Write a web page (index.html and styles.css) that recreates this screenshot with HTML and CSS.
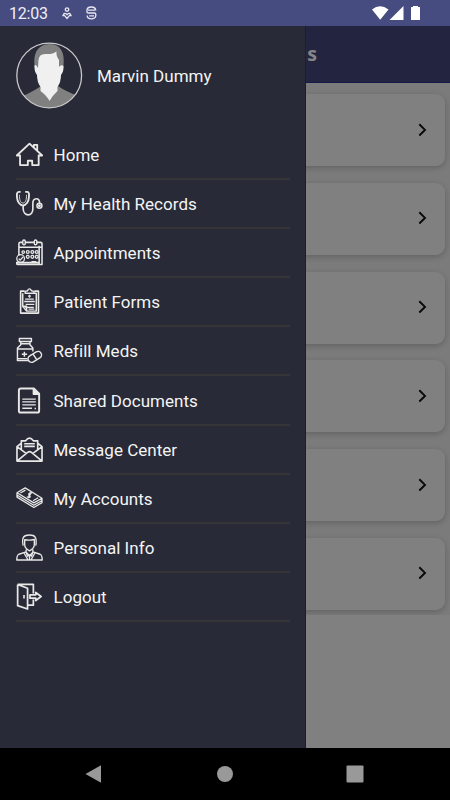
FILE: index.html
```html
<!DOCTYPE html>
<html lang="en">
<head>
<meta charset="utf-8">
<title>Health Records</title>
<link rel="stylesheet" href="styles.css">
</head>
<body>
<div class="phone">
  <header class="status">
    <span class="clock">12:03</span>
    <svg class="care" viewBox="0 0 10 13" fill="none" stroke="#e8e8f2" stroke-width="1.3"><circle cx="5" cy="2.500" r="1.700"/><path d="M5 8C4 5.800 1.700 5.800 1.700 7.600L5 11.500 8.300 7.600C8.300 5.800 6 5.800 5 8M.3 8.500H2M8 8.500h1.700"/></svg>
    <svg class="sim" viewBox="0 0 11 14" fill="none" stroke="#e8e8f2" stroke-width="1.3"><path d="M9.800 4.500C9.500-.3 1 0 1 4.300v1.700q0 1 1.300 1H8.500q1.300 0 1.300 1.300v1.300C9.800 14 1.200 14 1.200 9.500M2 4.200h7M3.200 9.800H8"/></svg>
    <svg class="signals" viewBox="0 0 50 16" fill="#fff"><path d="M0 3.5Q8-3 16.5 3.5L8.2 13.7ZM17.5 14 31.5 0V14Z"/><path d="M39.5 1h1.5V0h5v1h1.5q.5 0 .5.6V13.4q0 .6-.6.6h-7.8q-.6 0-.6-.6V1.6q0-.6.5-.6Z"/></svg>
  </header>
  <div class="stage">
    <main class="page">
      <div class="appbar"><h1>My Health Records</h1></div>
      <div class="cards">
        <div class="card"><svg viewBox="0 0 9 14"><path d="m1.3 1.3 5.7 5.6-5.7 5.6"/></svg></div>
        <div class="card"><svg viewBox="0 0 9 14"><path d="m1.3 1.3 5.7 5.6-5.7 5.6"/></svg></div>
        <div class="card"><svg viewBox="0 0 9 14"><path d="m1.3 1.3 5.7 5.6-5.7 5.6"/></svg></div>
        <div class="card"><svg viewBox="0 0 9 14"><path d="m1.3 1.3 5.7 5.6-5.7 5.6"/></svg></div>
        <div class="card"><svg viewBox="0 0 9 14"><path d="m1.3 1.3 5.7 5.6-5.7 5.6"/></svg></div>
        <div class="card"><svg viewBox="0 0 9 14"><path d="m1.3 1.3 5.7 5.6-5.7 5.6"/></svg></div>
      </div>
    </main>
    <aside class="drawer">
      <div class="profile">
        <svg class="avatar" viewBox="0 0 67 67">
          <defs><clipPath id="round"><circle cx="33.2" cy="33.5" r="32.5"/></clipPath></defs>
          <g clip-path="url(#round)">
            <path fill="#808080" d="M7 54Q18 49 25 44H42Q49 49 62 54V67H5Z"/>
            <path fill="#808080" d="M18.500 24C17 9 23 3 33 2C44 2 49 9 47.500 24L45 31H21Z"/>
            <path fill="#f0f0f0" d="M22.500 18Q23 12 29 12Q37 12.500 40.500 9.500Q40 14 43 18V25Q45 22 47.500 24Q48 29 45 33Q45 40 41.500 45V49Q36 54 33.500 59Q31 54 24.500 49V45Q21 40 21 33Q18 29 18.500 23.500Q20 22 22 26Z"/>
          </g>
          <circle cx="33.2" cy="33.5" r="32.4" fill="none" stroke="#c8c8ca" stroke-width="1.3"/>
        </svg>
        <span class="name">Marvin Dummy</span>
      </div>
      <nav>
        <a><svg viewBox="0 0 28 28"><path stroke-width="1.900" d="M.8 15 14 2.800 27.200 15H23.500V25H16.800V20.500H12.300V25H4.200V15ZM18.500 6.500V4H22V10"/></svg><span>Home</span></a>
        <a><svg viewBox="0 0 28 28"><path stroke-width="1.9" d="M4.800 2H3C.5 2 .8 5 1.100 8C1.300 12 4 16 7.200 16S13.200 12 13.300 8C13.600 5 14 2 11.500 2H9.500"/><path stroke-width=".9" d="M3.600 5C3.500 10 4.500 13.500 7.200 13.500S11 10 10.900 5"/><path stroke-width="1.700" d="M7.400 16.500V19C7.400 28 18 28 17.500 19V14C17.300 7.500 25 7.500 24.400 13.500"/><circle cx="24.300" cy="16.300" r="2.600"/><circle cx="24.300" cy="16.300" r=".8"/></svg><span>My Health Records</span></a>
        <a><svg viewBox="0 0 28 28"><path stroke-width="1.600" d="M3 17V5Q3 3.500 4.500 3.500H7M9.500 3.500H19M21.500 3.500H25.500Q27 3.500 27 5V26.500H2Q.5 26.500.5 24.500H24M24 7V26M3 8.500H27"/><rect x="7" y="1" width="2.600" height="5" rx="1.300"/><rect x="19" y="1" width="2.600" height="5" rx="1.300"/><g stroke-width="1.300"><circle cx="7.500" cy="13.500" r="1.300"/><circle cx="12.200" cy="13.500" r="1.500"/><circle cx="17" cy="13.500" r="1.500"/><circle cx="21.500" cy="13.500" r="1.500"/><circle cx="12.200" cy="18.500" r="1.500"/><circle cx="17" cy="18.500" r="1.500"/><circle cx="21.500" cy="18.500" r="1.500"/><circle cx="4.800" cy="20.300" r="4"/><path d="m2.800 20.300 1.500 1.600 3.200-3.500M16 23.500h5"/></g></svg><span>Appointments</span></a>
        <a><svg viewBox="0 0 28 28"><path stroke-width="1.700" d="M9 3.300H4.800V26H23.300V3.300H19"/><path d="M9.500 5.500V3.500L12 2.800Q14-1 16 2.800L18.500 3.500V5.500ZM7 5.500V19L11 24H21V5.500H19M7 19H11V24"/><path stroke-width="1.300" d="M14 7v3M12.500 8.500h3M9.500 11.500h9M8.500 14h11M10 17h9M9.500 20h9M13 22h6"/></svg><span>Patient Forms</span></a>
        <a><svg viewBox="0 0 28 28"><path d="M3.500 1.500H16V4.700H3.500ZM5 4.700V8L1.500 11.500V24.500H13M14.500 4.700V8L17.500 11.500V15M5 7H14.500M1.500 12.500H17.500M1.500 22.500H12M8.700 15.200V20.500M6 17.800H11.500"/><rect x="12" y="17" width="15" height="7.200" rx="3.600" transform="rotate(-31 19.500 20.600)"/><path d="m17.500 17.500 4 6"/></svg><span>Refill Meds</span></a>
        <a><svg viewBox="0 0 28 28"><path stroke-width="2" d="M18.500 1.500H5Q3 1.500 3 3.500V24.500Q3 26.500 5 26.500H22Q24 26.500 24 24.500V7Z"/><path stroke-width="1.400" d="M6.500 12.500H20.500M6.500 15.500H20.500M6.500 18.500H20.500M6.500 22H16.500M20 21.500V23"/><path fill="#eee" d="M18 2V7.500H24Z"/></svg><span>Shared Documents</span></a>
        <a><svg viewBox="0 0 28 28"><path stroke-width="1.700" d="M1 11V26H27V11L22.500 7.500M5.500 7.500 1 11 10.500 18M27 11 17.500 18M1 26 12 17Q14 15.500 16 17L27 26M5.500 14V5H10Q14-.5 18 5H22.500V14M8.500 8H19.500M8.500 10.700H19.500"/></svg><span>Message Center</span></a>
        <a><svg viewBox="0 0 28 28"><path stroke-width="1.300" d="M9.500 3 27 13.700 18.500 18.500 1 8ZM1 8V10.300L18.500 21 27 16M1 10.300V12.600L18.500 23.300 27 18.300V13.700M4.500 8.300 9.800 5.300M17.700 16.300 23 13.200"/><path stroke-width="1.400" d="M16.500 8.500Q13 7.500 13.300 10.500Q16 12 13.500 13Q12 13 11.500 12M16 7.500 12.500 13.500"/></svg><span>My Accounts</span></a>
        <a><svg viewBox="0 0 28 28"><path stroke-width="1.400" d="M7.500 12C5.500 3 8.500 1 14 1S22 3 20.500 12M9 6Q15 7 19 5.500V11Q19 15 14 17.500Q9 15 9 11ZM10.500 16V19L14 22.500 17.500 19V16M10.500 18.500 3 21Q.8 22 .8 27H27.200Q27.200 22 25 21L17.500 18.500M8.500 20 12.500 27M19.500 20 15.500 27M14 22.500V27"/><path d="m10.500 19 1.500 4 2-1 2 1 1.500-4"/></svg><span>Personal Info</span></a>
        <a><svg viewBox="0 0 28 28"><path stroke-width="1.800" d="M1.700 1.500H18V11M18 17V23H12.500M1.700 1.500V23.500L12 27V5.500L1.700 1.500M14.500 12.300H20.500V9.800L26 14 20.500 18.200V15.700H14.500Z"/><path stroke-width="1.700" d="M8.300 12.500V16"/></svg><span>Logout</span></a>
      </nav>
    </aside>
  </div>
  <footer class="navbar">
    <svg viewBox="0 0 18 18"><path d="M.5 9 16 .3V17.700Z"/></svg>
    <svg viewBox="0 0 18 18"><circle cx="9" cy="9" r="8"/></svg>
    <svg viewBox="0 0 18 18"><rect x=".5" y=".5" width="17" height="17" rx="1"/></svg>
  </footer>
</div>
</body>
</html>
```
FILE: styles.css
```css
* { box-sizing: border-box; }
body { margin: 0; font-family: Roboto, "Liberation Sans", sans-serif; }
svg { display: block; flex: none; }
.phone { width: 450px; height: 800px; display: flex; flex-direction: column; overflow: hidden; background: #000; }
.status { height: 26px; flex: none; display: flex; align-items: center; padding: 0 28px 0 9px; background: #464b80; color: #eeeef5; }
.clock { width: 53px; font-size: 16px; line-height: 26px; letter-spacing: -.2px; padding-top: 2px; }
.care { width: 10px; height: 13px; }
.sim { width: 11px; height: 14px; margin-left: 14px; }
.signals { width: 50px; height: 16px; margin-left: auto; margin-top: 2px; }
.stage { position: relative; flex: 1; }
.page { height: 100%; background: #808080; }
.appbar { height: 57px; display: flex; align-items: center; justify-content: center; background: #222440; border-bottom: 1px solid #151b47; }
.appbar h1 { margin: 0; font: 700 19.700px/28px "Open Sans", sans-serif; color: #858585; }
.cards { display: flex; flex-direction: column; gap: 16.800px; height: 532px; padding: 11px 5px 0; overflow: hidden; background: #7b7b7b; }
.card { height: 72px; flex: none; display: flex; align-items: center; justify-content: flex-end; padding-right: 18px; border-radius: 9px; background: #808080; box-shadow: 0 2px 6px rgba(0, 0, 0, .2); }
.card svg { width: 9px; height: 14px; margin-bottom: 1px; fill: none; stroke: #080808; stroke-width: 1.900; }
.drawer { position: absolute; inset: 0 auto 0 0; width: 306px; padding: 0 15px 0 16px; background: #282a37; border-right: 1px solid #1c1c35; color: #f4f4f4; }
.profile { height: 104.500px; display: flex; padding-top: 16px; }
.avatar { width: 67px; height: 67px; }
.name { margin-left: 14px; font-size: 17px; line-height: 68px; letter-spacing: .02px; }
nav { display: flex; flex-direction: column; }
nav a { height: 49.200px; display: flex; align-items: center; gap: 10.500px; border-bottom: 2px solid #353538; font-size: 17px; line-height: 24px; letter-spacing: .03px; }
nav span { padding-top: 1px; }
nav svg { width: 27px; height: 27px; fill: none; stroke: #e8e8e6; stroke-width: 1.500; stroke-linejoin: round; }
.navbar { height: 52px; flex: none; display: flex; align-items: center; justify-content: space-between; padding: 0 86px 0 85px; background: #000; }
.navbar svg { width: 18px; height: 18px; fill: #999; }
```
